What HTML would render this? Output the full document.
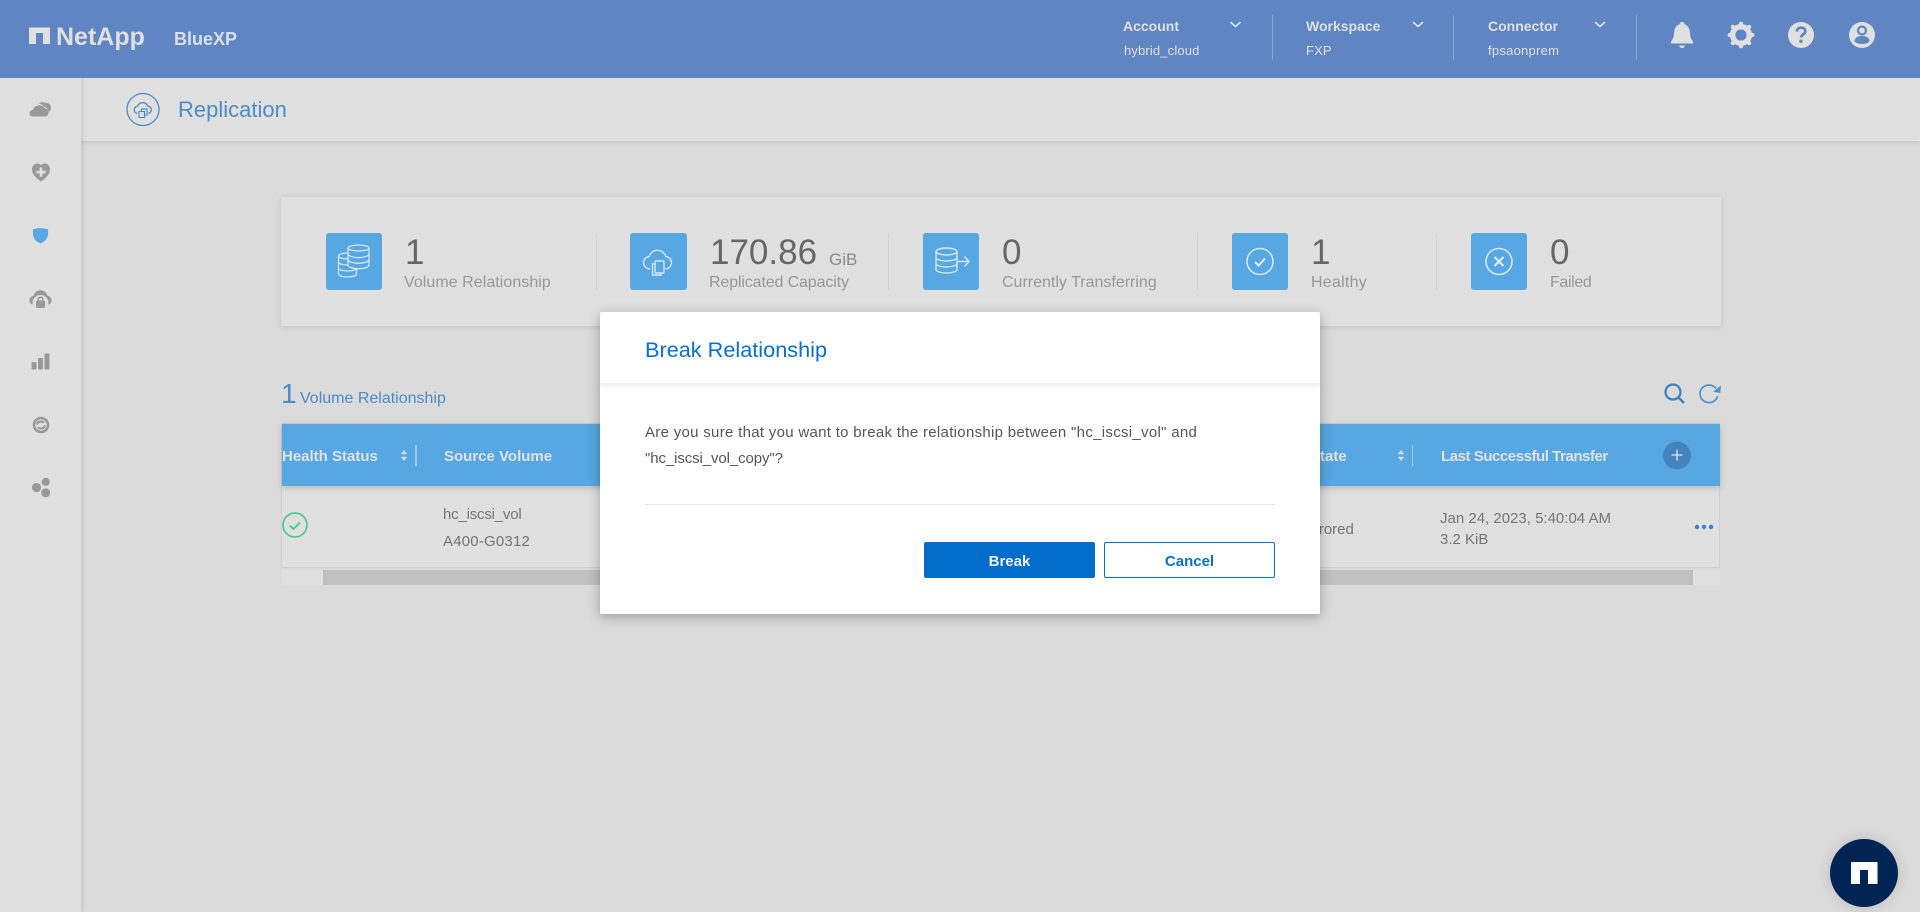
<!DOCTYPE html>
<html lang="en"><head><meta charset="utf-8"><title>Replication</title>
<style>
html,body{margin:0;padding:0;width:1920px;height:912px;overflow:hidden;background:#dbdbdb;font-family:"Liberation Sans",Arial,sans-serif}
.t{position:absolute;white-space:nowrap;line-height:20px}
.b{position:absolute}
.num{font-size:35px;color:#666;line-height:40px}
.lbl{font-size:16px;color:#979797}
.th{font-size:15px;font-weight:bold;color:#e2e2e2}
.td{font-size:15px;color:#747474}
.hd1{font-size:14px;font-weight:bold;color:#e0e0e0}
.hd2{font-size:13px;color:#e0e0e0;letter-spacing:.15px}
.stat{position:absolute;top:233px;height:57px;background:#56a7e2;border-radius:3px}
.dv{position:absolute;top:233px;height:57px;width:1px;background:#d2d2d2}
svg{position:absolute;left:0;top:0}
</style></head><body>
<!-- page chrome -->
<div class="b" style="left:81px;top:78px;width:1839px;height:63px;background:#e0e0e0;box-shadow:0 2px 4px rgba(0,0,0,.09)"></div>
<div class="b" style="left:0;top:78px;width:81px;height:834px;background:#e0e0e0;box-shadow:2px 0 5px rgba(0,0,0,.1)"></div>
<div class="b" style="left:0;top:0;width:1920px;height:78px;background:#5f85c3"></div>

<div class="t" style="left:56px;top:24px;font-size:25px;line-height:26px;font-weight:bold;color:#e0e0e0">NetApp</div>
<div class="t" style="left:174px;top:28px;font-size:18px;line-height:22px;font-weight:bold;color:#dcdfe6">BlueXP</div>
<div class="t hd1" style="left:1123px;top:16px">Account</div>
<div class="t hd2" style="left:1124px;top:41px">hybrid_cloud</div>
<div class="t hd1" style="left:1306px;top:16px">Workspace</div>
<div class="t hd2" style="left:1306px;top:41px">FXP</div>
<div class="t hd1" style="left:1488px;top:16px">Connector</div>
<div class="t hd2" style="left:1488px;top:41px;letter-spacing:.25px">fpsaonprem</div>
<div class="b" style="left:1272px;top:15px;width:1px;height:45px;background:#8ba6d3"></div>
<div class="b" style="left:1453px;top:15px;width:1px;height:45px;background:#8ba6d3"></div>
<div class="b" style="left:1636px;top:15px;width:1px;height:45px;background:#8ba6d3"></div>

<div class="t" style="left:178px;top:96px;font-size:22px;line-height:28px;color:#4a8cc8">Replication</div>

<!-- stats card -->
<div class="b" style="left:281px;top:197px;width:1440px;height:129px;background:#e0e0e0;box-shadow:0 1px 5px rgba(0,0,0,.12)"></div>
<div class="stat" style="left:326px;width:56px"></div>
<div class="stat" style="left:630px;width:57px"></div>
<div class="stat" style="left:923px;width:56px"></div>
<div class="stat" style="left:1232px;width:56px"></div>
<div class="stat" style="left:1471px;width:56px"></div>
<div class="dv" style="left:596px"></div>
<div class="dv" style="left:888px"></div>
<div class="dv" style="left:1197px"></div>
<div class="dv" style="left:1436px"></div>
<div class="t num" style="left:405px;top:233px">1</div>
<div class="t lbl" style="left:404px;top:273px;letter-spacing:.05px">Volume Relationship</div>
<div class="t num" style="left:710px;top:233px">170.86</div>
<div class="t" style="left:829px;top:250px;font-size:17px;color:#8a8a8a">GiB</div>
<div class="t lbl" style="left:709px;top:273px;letter-spacing:-.13px">Replicated Capacity</div>
<div class="t num" style="left:1002px;top:233px">0</div>
<div class="t lbl" style="left:1002px;top:273px">Currently Transferring</div>
<div class="t num" style="left:1311px;top:233px">1</div>
<div class="t lbl" style="left:1311px;top:273px;letter-spacing:.25px">Healthy</div>
<div class="t num" style="left:1550px;top:233px">0</div>
<div class="t lbl" style="left:1550px;top:273px;letter-spacing:-.35px">Failed</div>

<!-- table -->
<div class="t" style="left:281px;top:378px;font-size:28px;line-height:32px;color:#4a8cc8">1</div>
<div class="t" style="left:300px;top:389px;font-size:16px;color:#4a8cc8">Volume Relationship</div>
<div class="b" style="left:281px;top:423px;width:1439px;height:145px;border:1px solid #cfcfcf;box-sizing:border-box;background:#e0e0e0"></div>
<div class="b" style="left:282px;top:424px;width:1438px;height:62px;background:#56a7e2;box-shadow:0 2px 6px rgba(0,0,0,.18)"></div>
<div class="b" style="left:282px;top:570px;width:1438px;height:15px;background:#e0e0e0"></div>
<div class="b" style="left:323px;top:570px;width:1370px;height:15px;background:#c0c0c0"></div>
<div class="t th" style="left:282px;top:447px">Health Status</div>
<div class="t th" style="left:444px;top:447px">Source Volume</div>
<div class="t th" style="left:1310px;top:447px">State</div>
<div class="t th" style="left:1441px;top:447px;letter-spacing:-.45px">Last Successful Transfer</div>
<div class="b" style="left:415px;top:445px;width:2px;height:21px;background:#a5cdec"></div>
<div class="b" style="left:1412px;top:445px;width:1px;height:21px;background:#a5cdec"></div>
<div class="t td" style="left:443px;top:505px;letter-spacing:-.2px">hc_iscsi_vol</div>
<div class="t td" style="left:443px;top:532px;letter-spacing:.2px">A400-G0312</div>
<div class="t td" style="left:1298px;top:520px">Mirrored</div>
<div class="t td" style="left:1440px;top:509px">Jan 24, 2023, 5:40:04 AM</div>
<div class="t td" style="left:1440px;top:530px">3.2 KiB</div>

<!-- icons -->
<svg width="1920" height="912" viewBox="0 0 1920 912" fill="none">
  <!-- logo -->
  <path fill="#e0e0e0" d="M29 27.500h21v16.500h-7v-11h-7v11H29z"/>
  <!-- chevrons -->
  <g stroke="#dfe3ea" stroke-width="1.600" stroke-linecap="round" stroke-linejoin="round">
    <path d="M1231 22.500l4.500 4 4.500-4M1413.500 22.500l4.500 4 4.500-4M1595.500 22.500l4.500 4 4.500-4"/>
  </g>
  <!-- bell -->
  <path fill="#e0e0e0" d="M1682 22c1.400 0 2.300 1 2.400 2.300 3.700 1.200 5.200 4.400 5.500 8.200.3 3.700.8 6.500 3.100 9 .6.800.2 2-1 2h-20c-1.200 0-1.600-1.200-1-2 2.300-2.500 2.800-5.300 3.100-9 .3-3.800 1.800-7 5.500-8.200.1-1.300 1-2.300 2.400-2.300z"/>
  <path fill="#e0e0e0" d="M1679 45.500h6c-.4 1.500-1.500 2.500-3 2.500s-2.600-1-3-2.500z"/>
  <!-- gear -->
  <g transform="translate(1741 35)">
    <circle r="8.300" stroke="#e0e0e0" stroke-width="5.400"/>
    <g stroke="#e0e0e0" stroke-width="4.200" stroke-linecap="round">
      <path d="M0-10.500v-.8M0 10.500v.8M-10.500 0h-.8M10.500 0h.8M-7.600-7.600l-.6-.6M7.600-7.600l.6-.6M-7.600 7.600l-.6.6M7.600 7.600l.6.6"/>
    </g>
  </g>
  <!-- help -->
  <circle cx="1801" cy="35" r="13" fill="#e0e0e0"/>
  <path d="M1796.800 31.500c.2-2.500 1.900-3.900 4.300-3.900 2.400 0 4.200 1.400 4.200 3.600 0 3.200-4.200 3.300-4.200 6.300" stroke="#5f85c3" stroke-width="2.700"/>
  <circle cx="1801" cy="41.200" r="1.700" fill="#5f85c3"/>
  <!-- user -->
  <circle cx="1862" cy="35" r="13" fill="#e0e0e0"/>
  <circle cx="1862" cy="30.500" r="4" stroke="#5f85c3" stroke-width="2.200"/>
  <path fill="#5f85c3" d="M1854.500 41.500c0-3.600 3-5.500 7.500-5.500s7.500 1.900 7.500 5.500c-1.900 1.600-4.500 2.500-7.500 2.500s-5.600-.9-7.500-2.500z"/>

  <!-- sidebar -->
  <g fill="#999">
    <!-- clouds -->
    <path d="M39 103.500c1.500-1.500 4-1.800 5.800-.8 3.300-.3 6.200 1.800 6.200 5 0 2-1 3.400-2.500 4.300-.2-2.800-2-4.800-4.500-5.300-1-1.600-2.800-2.800-5-3.200z"/>
    <path d="M32.500 116.500c-2 0-3-1.300-3-3 0-2.200 1.600-3.600 3.600-3.800 1-2.600 3.400-4.400 6.200-4.400 2.400 0 4.300 1.100 5.400 3 2.200.1 3.800 1.800 3.800 4 0 2.400-1.500 4.200-3.500 4.200z"/>
    <!-- heart -->
    <path fill-rule="evenodd" d="M41 181.500c-3.400-2.600-9-6.300-9-12.300 0-3.300 2.500-5.700 5.300-5.700 1.500 0 2.800.6 3.700 1.700.9-1.100 2.200-1.700 3.700-1.700 2.800 0 5.300 2.400 5.300 5.700 0 6-5.600 9.700-9 12.300zm-1.300-14v3.300h-3.300v2.600h3.300v3.300h2.600v-3.300h3.300v-2.600h-3.300v-3.300z"/>
    <!-- shield -->
    <path fill="#56a7e2" d="M33 229.500c2.500-.9 5-1.400 7.500-1.400s5 .5 7.500 1.400c.4 4.300-.1 7.600-1.900 10-1.300 1.700-3.300 3-5.600 3.900-2.300-.9-4.300-2.200-5.600-3.900-1.800-2.400-2.300-5.700-1.900-10z"/>
    <!-- cloud lock -->
    <path d="M33 304.500c-2 0-3.500-1.700-3.500-4 0-2.500 1.700-4.300 4-4.600 1-3.500 3.700-5.600 7-5.600 3.300 0 6 2.100 7 5.600 2.300.3 4 2.100 4 4.600 0 2.300-1.500 4-3.500 4z"/>
    <circle cx="40.500" cy="303" r="8" fill="#e0e0e0"/>
    <rect x="30" y="304.500" width="21" height="6" fill="#e0e0e0"/>
    <path fill-rule="evenodd" d="M37.200 300.500h.3v-1.300c0-1.600 1.300-2.700 3-2.700s3 1.100 3 2.700v1.300h.3c.7 0 1.200.5 1.200 1.200v5.100c0 .7-.5 1.200-1.200 1.200h-6.600c-.7 0-1.200-.5-1.200-1.200v-5.100c0-.7.500-1.200 1.200-1.200zm1.800 0h3v-1.300c0-.7-.7-1.200-1.500-1.200s-1.500.5-1.500 1.200z"/>
    <!-- bars -->
    <rect x="31.500" y="362" width="5" height="7.500" rx="1"/>
    <rect x="38" y="358" width="5" height="11.500" rx="1"/>
    <rect x="44.500" y="353.500" width="5" height="16" rx="1"/>
    <!-- dots -->
    <circle cx="36.500" cy="487.500" r="4.600"/>
    <circle cx="45.700" cy="481.800" r="4"/>
    <circle cx="45.700" cy="492.800" r="4.500"/>
  </g>
  <circle cx="41" cy="425" r="7" stroke="#999" stroke-width="2.600"/>
  <path d="M37 424.500c.5-2 2.200-3 4-3 1.200 0 2.300.5 3 1.300M45 425.500c-.5 2-2.200 3-4 3-1.200 0-2.300-.5-3-1.300" stroke="#999" stroke-width="2.200"/>

  <!-- replication header icon -->
  <circle cx="143" cy="109.500" r="16" stroke="#4a8cc8" stroke-width="1.300"/>
  <path d="M137.500 113.500c-1.800-.4-3.200-1.900-3.200-3.800 0-2 1.500-3.600 3.500-3.700.7-2 2.600-3.300 4.900-3.300 2.300 0 4.200 1.300 4.900 3.300 2.100.1 3.700 1.700 3.700 3.700 0 1.900-1.300 3.500-3 3.800" stroke="#4a8cc8" stroke-width="1.300"/>
  <rect x="141.500" y="109" width="5.500" height="6" stroke="#4a8cc8" stroke-width="1.100" fill="#e0e0e0"/>
  <rect x="139" y="111.500" width="5.500" height="6" stroke="#4a8cc8" stroke-width="1.100" fill="#e0e0e0"/>

  <!-- stat 1 -->
  <g stroke="#d9e6ef" stroke-width="1.300" fill="none">
    <ellipse cx="347.500" cy="256" rx="9" ry="3"/>
    <path d="M338.500 256v18c0 1.700 4 3 9 3s9-1.300 9-3v-18M338.500 262c0 1.700 4 3 9 3M338.500 268c0 1.700 4 3 9 3s9-1.300 9-3"/>
    <path fill="#56a7e2" d="M348 248v17c0 2.200 4.700 4 10.500 4s10.500-1.800 10.500-4v-17z" stroke="none"/>
    <ellipse cx="358.500" cy="248" rx="10.500" ry="3"/>
    <path d="M348 248v17c0 2 4.700 3.800 10.500 3.800S369 267 369 265v-17M348 253.800c0 2 4.700 3.800 10.500 3.800s10.500-1.800 10.500-3.800M348 259.500c0 2 4.700 3.800 10.500 3.800s10.500-1.800 10.500-3.800"/>
  </g>
  <!-- stat 2 -->
  <g stroke="#d9e6ef" stroke-width="1.400" fill="none">
    <path d="M650 269c-3.800-.3-6.500-3-6.500-6.400 0-3.200 2.400-5.700 5.500-6 1.200-3.800 4.500-6.300 8.400-6.300 4 0 7.300 2.500 8.500 6.300 3.200.3 5.600 2.800 5.600 6 0 3.400-2.700 6.100-6 6.400"/>
    <rect x="655" y="261" width="9" height="12" rx="1"/>
    <path d="M655 264h-2.500v11h8.500v-2"/>
  </g>
  <!-- stat 3 -->
  <g stroke="#d9e6ef" stroke-width="1.400" fill="none">
    <ellipse cx="946.500" cy="251.500" rx="10.500" ry="3.500"/>
    <path d="M936 251.500v18c0 2 4.700 3.500 10.500 3.500s10.500-1.500 10.500-3.500v-18M936 257.500c0 2 4.700 3.500 10.500 3.500s10.500-1.500 10.500-3.500M936 263.500c0 2 4.700 3.500 10.500 3.500s10.500-1.500 10.500-3.500"/>
    <path d="M957 261.500h11.500M964.500 256.500l4.500 5-4.500 5" stroke-width="1.500"/>
  </g>
  <!-- stat 4 -->
  <circle cx="1260" cy="261.500" r="13" stroke="#d9e6ef" stroke-width="1.600"/>
  <path d="M1255 262l3.500 3.500 6.500-7" stroke="#e8eef3" stroke-width="2"/>
  <!-- stat 5 -->
  <circle cx="1499" cy="261.500" r="13" stroke="#d9e6ef" stroke-width="1.600"/>
  <path d="M1494.500 257l9 9M1503.500 257l-9 9" stroke="#e8eef3" stroke-width="2"/>

  <!-- sort arrows -->
  <path fill="#cfdde9" d="M404 450l3.300 4.300h-6.600zM404 461l3.300-4.300h-6.600zM1401 450l3.300 4.300h-6.600zM1401 461l3.300-4.300h-6.600z"/>
  <!-- plus -->
  <circle cx="1677" cy="455.500" r="14" fill="#4583bf"/>
  <path d="M1677 449.500v11M1671.500 455h11" stroke="#dfe8f0" stroke-width="1.300"/>
  <!-- search, refresh -->
  <circle cx="1673" cy="392" r="7.500" stroke="#3f7fbe" stroke-width="2.200"/>
  <path d="M1678.500 397.500l5.500 5.500" stroke="#3f7fbe" stroke-width="2.400"/>
  <path d="M1716 388.500c-1.700-2.200-4.300-3.500-7-3.500-4.900 0-9 3.900-9 8.800 0 4.900 4.100 8.800 9 8.800 4.100 0 7.600-2.700 8.700-6.500" stroke="#4f90cc" stroke-width="1.700"/>
  <path d="M1721 385.500l-.7 7.500-7.300-1.300z" fill="#4f90cc"/>
  <!-- health check -->
  <circle cx="295" cy="525" r="12" stroke="#4fc797" stroke-width="1.700"/>
  <path d="M289.800 525.500l3.700 3.500 6.500-6.500" stroke="#4fc797" stroke-width="2"/>
  <!-- dots -->
  <g fill="#3f7fbe"><circle cx="1697" cy="527" r="2.200"/><circle cx="1704" cy="527" r="2.200"/><circle cx="1711" cy="527" r="2.200"/></g>
</svg>

<!-- modal -->
<div class="b" style="left:600px;top:312px;width:720px;height:302px;background:#fff;border-radius:2px;box-shadow:0 3px 12px rgba(0,0,0,.3)"></div>
<div class="b" style="left:600px;top:383px;width:720px;height:2px;background:#f2f2f2;box-shadow:0 2px 3px rgba(0,0,0,.08)"></div>
<div class="t" style="left:645px;top:337px;font-size:21.700px;line-height:26px;color:#0a6fc9">Break Relationship</div>
<div class="t" style="left:645px;top:423px;font-size:15px;color:#555;letter-spacing:.3px">Are you sure that you want to break the relationship between "hc_iscsi_vol" and</div>
<div class="t" style="left:645px;top:449px;font-size:15px;color:#555;letter-spacing:-.1px">"hc_iscsi_vol_copy"?</div>
<div class="b" style="left:645px;top:504px;width:630px;height:1px;background:#e3e3e3"></div>
<div class="b" style="left:924px;top:542px;width:171px;height:36px;background:#006dca;border-radius:2px"></div>
<div class="t" style="left:924px;top:552px;width:171px;text-align:center;font-size:15px;font-weight:bold;color:#f0f4f8">Break</div>
<div class="b" style="left:1104px;top:542px;width:171px;height:36px;border:1px solid #0a6fc9;box-sizing:border-box;border-radius:2px;background:#fff"></div>
<div class="t" style="left:1104px;top:552px;width:171px;text-align:center;font-size:15px;font-weight:bold;color:#0a6fc9">Cancel</div>

<!-- chat bubble -->
<div class="b" style="left:1830px;top:839px;width:68px;height:68px;border-radius:50%;background:#002555;box-shadow:0 0 14px rgba(0,0,0,.14)"></div>
<svg width="1920" height="912" viewBox="0 0 1920 912"><path fill="#fff" d="M1851 862h26.500v22h-9.500v-14h-8v14h-9z"/></svg>
</body></html>
